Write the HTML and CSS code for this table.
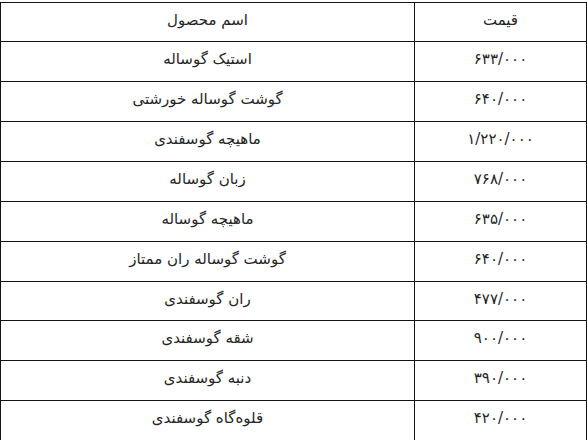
FILE: index.html
```html
<!DOCTYPE html>
<html lang="fa" dir="rtl">
<head>
<meta charset="utf-8">
<link rel="stylesheet" href="styles.css">
</head>
<body>
<table class="prices">
  <tr><td class="price">قیمت</td><td class="name">اسم محصول</td></tr>
  <tr><td class="price">۶۳۳/۰۰۰</td><td class="name">استیک گوساله</td></tr>
  <tr><td class="price">۶۴۰/۰۰۰</td><td class="name">گوشت گوساله خورشتی</td></tr>
  <tr><td class="price">۱/۲۲۰/۰۰۰</td><td class="name">ماهیچه گوسفندی</td></tr>
  <tr><td class="price">۷۶۸/۰۰۰</td><td class="name">زبان گوساله</td></tr>
  <tr><td class="price">۶۳۵/۰۰۰</td><td class="name">ماهیچه گوساله</td></tr>
  <tr><td class="price">۶۴۰/۰۰۰</td><td class="name">گوشت گوساله ران ممتاز</td></tr>
  <tr><td class="price">۴۷۷/۰۰۰</td><td class="name">ران گوسفندی</td></tr>
  <tr><td class="price">۹۰۰/۰۰۰</td><td class="name">شقه گوسفندی</td></tr>
  <tr><td class="price">۳۹۰/۰۰۰</td><td class="name">دنبه گوسفندی</td></tr>
  <tr><td class="price">۴۲۰/۰۰۰</td><td class="name">قلوه‌گاه گوسفندی</td></tr>
</table>
</body>
</html>
```
FILE: styles.css
```css
html, body {
  margin: 0;
  padding: 0;
  background: #fff;
}
body {
  font-family: "DejaVu Sans", sans-serif;
  font-size: 15px;
  color: #262626;
}
.prices {
  border-collapse: collapse;
  width: 587px;
  margin-top: 1.5px;
  table-layout: fixed;
}
.prices tr {
  height: 39.87px;
}
.prices td {
  border: 1px solid #141414;
  padding: 8px 0 0 0;
  vertical-align: top;
  text-align: center;
  line-height: 18px;
}
.prices td.price {
  width: 171px;
}
```
